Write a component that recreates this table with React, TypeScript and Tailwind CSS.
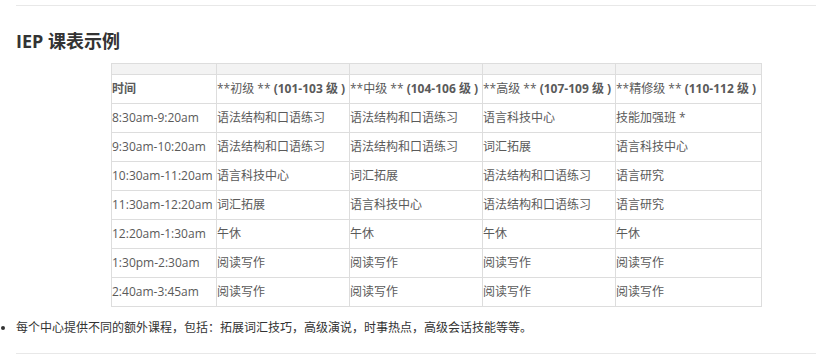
const font = '"Open Sans", "Noto Sans CJK SC", sans-serif';

const levels = [
  { name: "初级", range: "(101-103 级 )" },
  { name: "中级", range: "(104-106 级 )" },
  { name: "高级", range: "(107-109 级 )" },
  { name: "精修级", range: "(110-112 级 )" },
];

const rows = [
  ["8:30am-9:20am", "语法结构和口语练习", "语法结构和口语练习", "语言科技中心", "技能加强班 *"],
  ["9:30am-10:20am", "语法结构和口语练习", "语法结构和口语练习", "词汇拓展", "语言科技中心"],
  ["10:30am-11:20am", "语言科技中心", "词汇拓展", "语法结构和口语练习", "语言研究"],
  ["11:30am-12:20am", "词汇拓展", "语言科技中心", "语法结构和口语练习", "语言研究"],
  ["12:20am-1:30am", "午休", "午休", "午休", "午休"],
  ["1:30pm-2:30am", "阅读写作", "阅读写作", "阅读写作", "阅读写作"],
  ["2:40am-3:45am", "阅读写作", "阅读写作", "阅读写作", "阅读写作"],
];

const widths = ["w-[105px]", "w-[133px]", "w-[133px]", "w-[133px]", "w-[146px]"];

const App = () => {
  return (
    <main className="h-[355px] w-[816px] overflow-hidden bg-white pt-[5px]" style={{ fontFamily: font }}>
      <div className="ml-4 border-t border-[#e8e8e8]" />
      <h2 className="ml-4 mt-[23px] text-[18px] font-bold leading-6 text-[#333]">IEP 课表示例</h2>
      <table className="ml-[111px] mt-[10px] border-collapse text-[12px] text-[#5a5a5a]">
        <thead>
          <tr className="h-[11px] bg-[#f3f3f3]">
            {widths.map((w, i) => (
              <th key={i} className={`${w} border border-[#ddd] p-0`} />
            ))}
          </tr>
        </thead>
        <tbody>
          <tr className="h-[29px]">
            <td className="border border-[#ddd] p-0 font-bold">时间</td>
            {levels.map((l) => (
              <td key={l.name} className="whitespace-nowrap border border-[#ddd] p-0">
                **{l.name} ** <strong className="font-bold">{l.range}</strong>
              </td>
            ))}
          </tr>
          {rows.map((r) => (
            <tr key={r[0]} className="h-[29px]">
              {r.map((c, i) => (
                <td key={i} className="whitespace-nowrap border border-[#ddd] p-0">
                  {c}
                </td>
              ))}
            </tr>
          ))}
        </tbody>
      </table>
      <ul className="mt-[11px] list-disc pl-4 text-[12px] leading-5 text-[#333]">
        <li>每个中心提供不同的额外课程，包括：拓展词汇技巧，高级演说，时事热点，高级会话技能等等。</li>
      </ul>
      <div className="ml-4 mt-[15px] border-t border-[#e8e8e8]" />
    </main>
  );
};

export default App;
